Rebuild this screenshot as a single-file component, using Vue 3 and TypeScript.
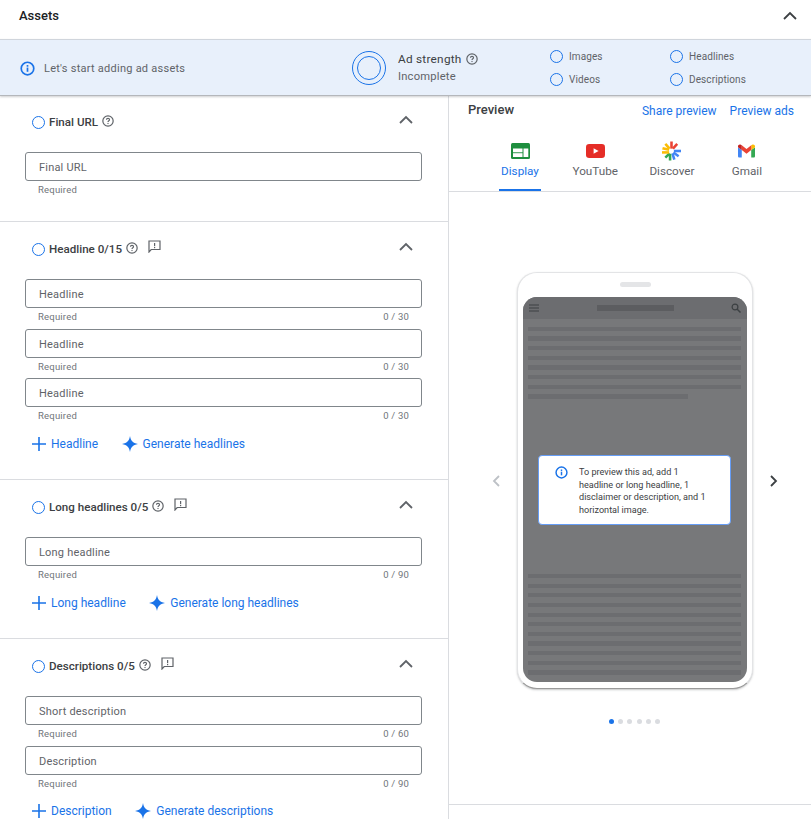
<script setup lang="ts">
interface Field { label: string; count?: string }
interface Section {
  title: string
  feedback: boolean
  fields: Field[]
  actions?: string[]
}
const sections: Section[] = [
  { title: 'Final URL', feedback: false, fields: [{ label: 'Final URL' }] },
  {
    title: 'Headline 0/15', feedback: true,
    fields: [
      { label: 'Headline', count: '0 / 30' },
      { label: 'Headline', count: '0 / 30' },
      { label: 'Headline', count: '0 / 30' },
    ],
    actions: ['Headline', 'Generate headlines'],
  },
  {
    title: 'Long headlines 0/5', feedback: true,
    fields: [{ label: 'Long headline', count: '0 / 90' }],
    actions: ['Long headline', 'Generate long headlines'],
  },
  {
    title: 'Descriptions 0/5', feedback: true,
    fields: [
      { label: 'Short description', count: '0 / 60' },
      { label: 'Description', count: '0 / 90' },
    ],
    actions: ['Description', 'Generate descriptions'],
  },
]
const topLines = [0, 1, 2, 3, 4, 5, 6]
const bottomLines = Array.from({ length: 11 }, (_, i) => i)
const dots = [0, 1, 2, 3, 4, 5]
</script>

<template>
  <div class="page">
    <header class="top">
      <h1>Assets</h1>
      <svg class="chev-top" width="16" height="10" viewBox="0 0 16 10"><path d="M2 8l6-6 6 6" fill="none" stroke="#3c4043" stroke-width="1.8" /></svg>
    </header>

    <div class="banner">
      <div class="banner-msg">
        <svg width="15" height="15" viewBox="0 0 16 16"><circle cx="8" cy="8" r="6.7" fill="none" stroke="#1a73e8" stroke-width="1.8" /><rect x="7.1" y="7" width="1.8" height="4.5" fill="#1a73e8" /><rect x="7.1" y="4.3" width="1.8" height="1.8" fill="#1a73e8" /></svg>
        <span>Let's start adding ad assets</span>
      </div>
      <div class="strength">
        <svg width="36" height="36" viewBox="0 0 36 36"><circle cx="18" cy="18" r="16.5" fill="none" stroke="#1a73e8" stroke-width="1" /><circle cx="18" cy="18" r="11.5" fill="none" stroke="#1a73e8" stroke-width="1" /></svg>
        <div class="strength-text">
          <div class="strength-title">Ad strength
            <svg class="help" width="12" height="12" viewBox="0 0 13 13"><circle cx="6.5" cy="6.5" r="5.6" fill="none" stroke="#5f6368" stroke-width="1.3" /><path d="M4.8 5.2c0-1 .8-1.6 1.7-1.6s1.7.6 1.7 1.5c0 1.2-1.7 1.2-1.7 2.5" fill="none" stroke="#5f6368" stroke-width="1.2" /><rect x="5.900" y="8.600" width="1.200" height="1.200" fill="#5f6368" /></svg>
          </div>
          <div class="strength-sub">Incomplete</div>
        </div>
      </div>
      <div class="checks">
        <div class="check" v-for="c in ['Images', 'Headlines', 'Videos', 'Descriptions']" :key="c">
          <span class="ring small"></span>{{ c }}
        </div>
      </div>
    </div>

    <div class="columns">
      <main class="left">
        <section v-for="s in sections" :key="s.title" class="section">
          <div class="sec-head">
            <span class="ring"></span>
            <span class="sec-title">{{ s.title }}</span>
            <svg class="help" width="12" height="12" viewBox="0 0 13 13"><circle cx="6.5" cy="6.5" r="5.6" fill="none" stroke="#5f6368" stroke-width="1.3" /><path d="M4.8 5.2c0-1 .8-1.6 1.7-1.6s1.7.6 1.7 1.5c0 1.2-1.7 1.2-1.7 2.5" fill="none" stroke="#5f6368" stroke-width="1.2" /><rect x="5.900" y="8.600" width="1.200" height="1.200" fill="#5f6368" /></svg>
            <svg v-if="s.feedback" class="feedback" width="13" height="13" viewBox="0 0 13 13"><path d="M1 1h11v8.500H3.200L1 12z" fill="none" stroke="#5f6368" stroke-width="1.200" /><rect x="6" y="3" width="1.200" height="3.200" fill="#5f6368" /><rect x="6" y="7" width="1.200" height="1.200" fill="#5f6368" /></svg>
            <svg class="chev" width="16" height="10" viewBox="0 0 16 10"><path d="M2 8l6-6 6 6" fill="none" stroke="#5f6368" stroke-width="1.8" /></svg>
          </div>
          <div v-for="(f, i) in s.fields" :key="i" class="field">
            <div class="input">{{ f.label }}</div>
            <div class="hint"><span>Required</span><span v-if="f.count">{{ f.count }}</span></div>
          </div>
          <div v-if="s.actions" class="actions">
            <a class="action">
              <svg width="14" height="14" viewBox="0 0 14 14"><path d="M7 0v14M0 7h14" stroke="#1a73e8" stroke-width="1.6" /></svg>
              {{ s.actions[0] }}
            </a>
            <a class="action">
              <svg width="16" height="16" viewBox="0 0 16 16"><path d="M8 0c.7 4.6 2.6 7 8 8-5.4 1-7.3 3.4-8 8-.7-4.6-2.6-7-8-8 5.4-1 7.3-3.4 8-8z" fill="#1a73e8" /></svg>
              {{ s.actions[1] }}
            </a>
          </div>
        </section>
      </main>

      <aside class="right">
        <div class="prev-head">
          <h2>Preview</h2>
          <div class="links"><a>Share preview</a><a>Preview ads</a></div>
        </div>
        <nav class="tabs">
          <div class="tab active">
            <svg width="19" height="16" viewBox="0 0 19 16"><rect width="19" height="16" rx="1.5" fill="#1e8e3e" /><rect x="2" y="5.500" width="9.500" height="3.800" fill="#fff" /><rect x="2" y="10.200" width="9.500" height="3.800" fill="#fff" /><rect x="12.500" y="5.500" width="4.800" height="8.500" fill="#fff" /></svg>
            <span>Display</span>
          </div>
          <div class="tab">
            <svg width="19" height="14" viewBox="0 0 19 14"><rect width="19" height="14" rx="3.200" fill="#e52d27" /><path d="M7.600 4.200l5 2.800-5 2.800z" fill="#fff" /></svg>
            <span>YouTube</span>
          </div>
          <div class="tab">
            <svg width="19" height="19" viewBox="0 0 20 20" stroke-width="2.700">
              <path d="M10 0v7.500" stroke="#ea4335" /><path d="M16 2.500l-4.500 5" stroke="#ea4335" />
              <path d="M20 10h-7.500" stroke="#4285f4" /><path d="M17.500 15.500l-5.500-4" stroke="#4285f4" /><path d="M13 19l-2-6.500" stroke="#4285f4" />
              <path d="M8.500 20v-7M3.500 17l4.500-4.500" stroke="#34a853" />
              <path d="M0 11.500h7.500" stroke="#fbbc04" /><path d="M0.500 7l7 1.800" stroke="#fbbc04" /><path d="M3.500 2.500l4.500 5" stroke="#fbbc04" />
            </svg>
            <span>Discover</span>
          </div>
          <div class="tab last">
            <svg width="17" height="13" viewBox="0 0 18 14"><path d="M0 3v9.500c0 .8.6 1.500 1.400 1.500H4V6z" fill="#4285f4" /><path d="M14 6v8h2.600c.8 0 1.400-.7 1.400-1.500V3z" fill="#34a853" /><path d="M14 1v5l4-3V2c0-1.600-1.800-2.400-3-1.600z" fill="#fbbc04" /><path d="M4 6V1l5 3.800L14 1v5L9 9.800z" fill="#ea4335" /><path d="M0 2c0-1.600 1.800-2.400 3-1.600L4 1v5L0 3z" fill="#c5221f" /></svg>
            <span>Gmail</span>
          </div>
        </nav>

        <div class="stage">
          <svg class="nav" width="12" height="14" viewBox="0 0 12 14"><path d="M9 2L4 7l5 5" fill="none" stroke="#bdc1c6" stroke-width="1.800" /></svg>
          <div class="phone">
            <div class="speaker"></div>
            <div class="screen">
              <div class="bar">
                <svg width="10" height="8" viewBox="0 0 10 8"><path d="M0 1h10M0 4h10M0 7h10" stroke="#3c4043" stroke-width="1" /></svg>
                <span class="bar-title"></span>
                <svg width="10" height="10" viewBox="0 0 10 10"><circle cx="4" cy="4" r="2.900" fill="none" stroke="#3c4043" stroke-width="1.200" /><path d="M6 6l3.500 3.500" stroke="#3c4043" stroke-width="1.500" /></svg>
              </div>
              <div class="lines top-lines">
                <i v-for="l in topLines" :key="l"></i>
                <i class="short"></i>
              </div>
              <div class="notice">
                <svg width="13" height="13" viewBox="0 0 16 16"><circle cx="8" cy="8" r="6.700" fill="none" stroke="#1a73e8" stroke-width="1.800" /><rect x="7.100" y="7" width="1.800" height="4.500" fill="#1a73e8" /><rect x="7.100" y="4.300" width="1.800" height="1.800" fill="#1a73e8" /></svg>
                <p>To preview this ad, add 1 headline or long headline, 1 disclaimer or description, and 1 horizontal image.</p>
              </div>
              <div class="lines bottom-lines">
                <i v-for="l in bottomLines" :key="l"></i>
              </div>
            </div>
          </div>
          <svg class="nav" width="12" height="14" viewBox="0 0 12 14"><path d="M3 2l5 5-5 5" fill="none" stroke="#3c4043" stroke-width="1.800" /></svg>
        </div>
        <div class="dots">
          <span v-for="d in dots" :key="d" :class="{ on: d === 0 }"></span>
        </div>
        <div class="foot">Your ads might not always include all your assets</div>
      </aside>
    </div>
  </div>
</template>

<style scoped>
.page {
  width: 811px;
  height: 819px;
  overflow: hidden;
  background: #fff;
  font-family: Roboto, "Liberation Sans", sans-serif;
  color: #3c4043;
}
.top {
  height: 39px;
  display: flex;
  align-items: flex-start;
  justify-content: space-between;
  padding: 7px 13px 0 19px;
  box-sizing: border-box;
}
.top h1 { margin: 0; font-size: 13px; font-weight: 500; line-height: 18px; color: #202124; }
.chev-top { margin-top: 4px; }
.banner {
  height: 57px;
  box-sizing: border-box;
  background: #e8f0fb;
  border-top: 1px solid #d0d5dc;
  border-bottom: 1px solid #b4b7bb;
  box-shadow: 0 1px 2px rgba(60, 64, 67, .25);
  display: flex;
  align-items: center;
  position: relative;
  padding-left: 20px;
  font-size: 11px;
}
.banner-msg { display: flex; align-items: center; gap: 9px; width: 331px; letter-spacing: .25px; color: #5f6368; padding-top: 1px; }
.strength { display: flex; align-items: center; gap: 11px; width: 199px; }
.strength-title { display: flex; align-items: center; gap: 4px; color: #3c4043; font-size: 11.800px; line-height: 17px; letter-spacing: .25px; }
.strength-sub { color: #5f6368; font-size: 11.200px; line-height: 17px; letter-spacing: .2px; }
.checks {
  display: grid;
  grid-template-columns: 120px 1fr;
  row-gap: 9px;
  font-size: 10px;
  letter-spacing: .1px;
  color: #5f6368;
}
.check { display: flex; align-items: center; gap: 6px; height: 14px; }
.ring {
  width: 11px;
  height: 11px;
  border: 1px solid #1a73e8;
  border-radius: 50%;
  flex: none;
  box-sizing: content-box;
  display: block;
}
.ring.small { width: 11px; height: 11px; }
.columns { display: flex; height: 723px; }
.left { width: 448px; flex: none; border-right: 1px solid #dadce0; }
.section { padding: 19px 26px 0 25px; border-bottom: 1px solid #dadce0; }
.section:first-child { padding-top: 18px; height: 126px; box-sizing: border-box; }
.sec-head { display: flex; align-items: center; height: 16px; padding-left: 7px; margin-bottom: 22px; position: relative; }
.sec-title { margin-left: 4px; font-size: 11.600px; font-weight: 500; color: #3c4043; }
.help { margin-left: 4px; position: relative; top: -1px; flex: none; }
.strength-title .help { margin-left: 0; top: 0; }
.feedback { margin-left: 10px; position: relative; top: -3px; }
.chev { margin-left: auto; margin-right: 8px; position: relative; top: -2px; }
.field { margin-bottom: 5.500px; }
.input {
  height: 29px;
  box-sizing: border-box;
  border: 1px solid #80868b;
  border-radius: 3px;
  padding: 2px 13px 0;
  display: flex;
  align-items: center;
  font-size: 11px;
  letter-spacing: .2px;
  color: #5f6368;
}
.hint {
  display: flex;
  justify-content: space-between;
  padding: 2px 13px 0;
  font-size: 9.500px;
  line-height: 13px;
  letter-spacing: .2px;
  color: #70757a;
}
.actions { display: flex; gap: 23.500px; padding: 7px 0 26.500px 7px; height: 18px; }
.action { display: flex; align-items: center; gap: 5px; font-size: 12px; color: #1a73e8; }
.right { flex: 1; min-width: 0; display: flex; flex-direction: column; }
.prev-head { display: flex; justify-content: space-between; padding: 6px 17px 0 19px; height: 21px; }
.prev-head h2 { margin: 0; font-size: 13px; font-weight: 500; line-height: 16px; color: #3c4043; }
.links { display: flex; gap: 13px; font-size: 12px; color: #1a73e8; padding-top: 2px; }
.tabs {
  display: flex;
  gap: 31.500px;
  height: 74px;
  box-sizing: border-box;
  padding: 23px 0 0 50px;
  border-bottom: 1px solid #dadce0;
  font-size: 11.700px;
  color: #5f6368;
}
.tab { display: flex; flex-direction: column; align-items: center; gap: 3px; min-width: 40px; height: 50px; position: relative; }
.tab svg { height: 20px; }
.tab.last { margin-left: 1px; }
.tab.active { color: #1a73e8; min-width: 42px; }
.tab.active::after { content: ""; position: absolute; left: 0; right: 0; bottom: 0; height: 2px; background: #1a73e8; }
.stage { display: flex; align-items: center; gap: 15px; margin-top: 80px; padding-left: 41px; }
.phone {
  width: 236px;
  height: 417px;
  box-sizing: border-box;
  border: 1px solid #e3e4e6;
  border-bottom-color: #9a9a9a;
  border-radius: 20px;
  padding: 0 5px;
  box-shadow: 0 1px 2px rgba(60, 64, 67, .3);
  display: flex;
  flex-direction: column;
  background: #fff;
}
.speaker { width: 31px; height: 5px; border-radius: 3px; background: #e4e5e7; margin: 9px auto 10px; flex: none; }
.screen {
  flex: 1;
  background: #77787a;
  border-radius: 14px;
  margin-bottom: 6px;
  overflow: hidden;
  position: relative;
}
.bar { height: 22px; background: #6c6d70; display: flex; align-items: center; justify-content: space-between; padding: 0 6px 0 6px; }
.bar-title { width: 77px; height: 6px; background: #5c5d60; }
.lines { display: flex; flex-direction: column; gap: 5.370px; padding: 0 6px 0 5px; }
.lines i { display: block; height: 4.300px; background: #6c6d70; }
.lines i.short { width: 160px; }
.top-lines { margin-top: 7.700px; }
.bottom-lines { margin-top: 49px; }
.notice {
  margin: 56.300px 16px 0 15px;
  height: 70px;
  box-sizing: border-box;
  background: #fff;
  border: 1px solid #669df6;
  border-radius: 4px;
  padding: 10px 10px 0 16px;
  display: flex;
  gap: 11px;
}
.notice svg { flex: none; }
.notice p { margin: 0; width: 132px; font-size: 9.100px; line-height: 12.800px; color: #3c4043; }
.dots { display: flex; justify-content: center; gap: 4.330px; margin-top: 29.500px; padding-left: 9px; }
.dots span { width: 5px; height: 5px; border-radius: 50%; background: #dadce0; }
.dots span.on { background: #1a73e8; }
.foot {
  margin-top: 80.500px;
  border-top: 1px solid #dadce0;
  padding: 9.500px 0 0 44px;
  font-size: 11.800px;
  line-height: 16px;
  white-space: nowrap;
  overflow: hidden;
  color: #5f6368;
}
</style>
